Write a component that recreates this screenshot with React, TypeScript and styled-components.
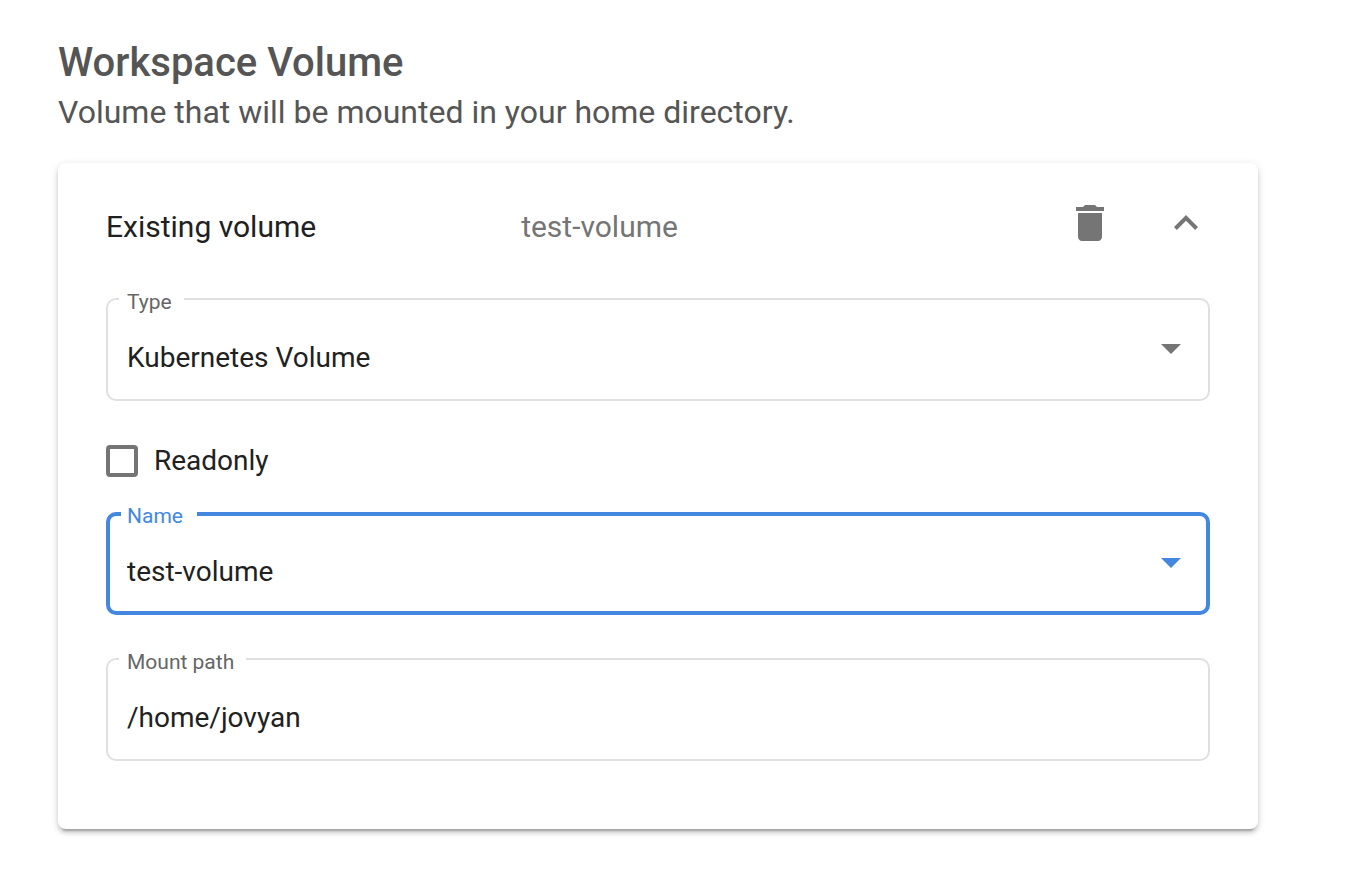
import React, { useState } from "react";
import styled, { createGlobalStyle } from "styled-components";

const colors = {
  heading: "#555555",
  text: "#212121",
  muted: "#757575",
  label: "#666666",
  outline: "#e0e0e0",
  primary: "#4387df",
};

const GlobalStyle = createGlobalStyle`
  *, *::before, *::after { box-sizing: border-box; }
  body {
    margin: 0;
    background: #ffffff;
    color: ${colors.text};
    font-family: Roboto, "Liberation Sans", sans-serif;
  }
  button, input, select { font-family: inherit; }
`;

const Section = styled.section`
  padding: 39px 92px 54px 58px;
`;

const Title = styled.h1`
  margin: 0;
  color: ${colors.heading};
  font-size: 40px;
  font-weight: 500;
  line-height: 48px;
`;

const Subtitle = styled.p`
  margin: 0 0 29px;
  padding-top: 3px;
  color: ${colors.heading};
  font-size: 32px;
  line-height: 44px;
`;

const Card = styled.article`
  padding: 36px 48px 68px;
  border-radius: 8px;
  background: #ffffff;
  box-shadow:
    0 6px 2px -4px rgba(0, 0, 0, 0.2),
    0 4px 4px 0 rgba(0, 0, 0, 0.14),
    0 2px 10px 0 rgba(0, 0, 0, 0.12);
`;

const CardHeader = styled.header`
  display: grid;
  grid-template-columns: 16fr 21fr auto;
  align-items: center;
  margin-bottom: 51px;
`;

const CardTitle = styled.h2`
  margin: 0;
  padding-top: 8px;
  font-size: 30px;
  font-weight: 400;
  line-height: 40px;
`;

const CardSummary = styled.span`
  padding-top: 8px;
  color: ${colors.muted};
  font-size: 30px;
  line-height: 40px;
`;

const Actions = styled.div`
  display: flex;
  gap: 48px;
`;

const IconButton = styled.button`
  display: flex;
  align-items: center;
  justify-content: center;
  width: 48px;
  height: 48px;
  padding: 0;
  border: 0;
  background: transparent;
  color: ${colors.muted};
  cursor: pointer;
`;

const Form = styled.form`
  display: flex;
  flex-direction: column;
`;

const Field = styled.div<{ $active?: boolean }>`
  position: relative;
  color: ${(p) => (p.$active ? colors.primary : colors.muted)};
`;

const FieldLabel = styled.label<{ $active?: boolean }>`
  position: absolute;
  top: -8px;
  left: ${(p) => (p.$active ? 15 : 13)}px;
  padding: 0 ${(p) => (p.$active ? 14 : 12)}px 0 ${(p) => (p.$active ? 6 : 8)}px;
  background: #ffffff;
  color: ${(p) => (p.$active ? colors.primary : colors.label)};
  font-size: 21px;
  line-height: 24px;
`;

const control = `
  display: block;
  width: 100%;
  height: 103px;
  margin: 0;
  border-radius: 10px;
  outline: none;
  background: transparent;
  color: ${colors.text};
  font-size: 28px;
  line-height: 36px;
  appearance: none;
`;

const Select = styled.select<{ $active?: boolean }>`
  ${control}
  border: ${(p) => (p.$active ? `4px solid ${colors.primary}` : `2px solid ${colors.outline}`)};
  padding: 16px 60px 0 ${(p) => (p.$active ? 17 : 19)}px;
`;

const TextInput = styled.input`
  ${control}
  border: 2px solid ${colors.outline};
  padding: 16px 19px 0;
`;

const SelectArrow = styled.svg`
  position: absolute;
  top: 46px;
  right: 29px;
  pointer-events: none;
`;

const CheckRow = styled.label`
  display: flex;
  align-items: center;
  align-self: flex-start;
  gap: 16px;
  margin: 44px 0 35px;
  font-size: 28px;
  line-height: 32px;
`;

const Checkbox = styled.input`
  width: 32px;
  height: 32px;
  margin: 0;
  border: 4px solid ${colors.muted};
  border-radius: 4px;
  background: #ffffff;
  appearance: none;

  &:checked {
    border-color: ${colors.primary};
    background: ${colors.primary};
  }
`;

const LastField = styled(Field)`
  margin-top: 43px;
`;

const Arrow = () => (
  <SelectArrow width="20" height="10" viewBox="0 0 20 10" aria-hidden="true">
    <path d="M0 0h20L10 10z" fill="currentColor" />
  </SelectArrow>
);

export default function App() {
  const [readonly, setReadonly] = useState(false);
  const [path, setPath] = useState("/home/jovyan");

  return (
    <>
      <GlobalStyle />
      <Section>
        <Title>Workspace Volume</Title>
        <Subtitle>Volume that will be mounted in your home directory.</Subtitle>
        <Card>
          <CardHeader>
            <CardTitle>Existing volume</CardTitle>
            <CardSummary>test-volume</CardSummary>
            <Actions>
              <IconButton type="button" aria-label="Delete volume">
                <svg width="48" height="48" viewBox="0 0 24 24" fill="currentColor">
                  <path d="M6 19c0 1.1.9 2 2 2h8c1.1 0 2-.9 2-2V7H6v12zM19 4h-3.5l-1-1h-5l-1 1H5v2h14V4z" />
                </svg>
              </IconButton>
              <IconButton type="button" aria-label="Collapse panel">
                <svg width="24" height="16" viewBox="0 0 24 16" fill="currentColor">
                  <path d="M12 0L24 12L21.2 14.9L12 5.7L2.8 14.9L0 12z" />
                </svg>
              </IconButton>
            </Actions>
          </CardHeader>
          <Form>
            <Field>
              <Select id="type" defaultValue="kubernetes">
                <option value="kubernetes">Kubernetes Volume</option>
              </Select>
              <FieldLabel htmlFor="type">Type</FieldLabel>
              <Arrow />
            </Field>
            <CheckRow>
              <Checkbox
                type="checkbox"
                checked={readonly}
                onChange={(e) => setReadonly(e.target.checked)}
              />
              Readonly
            </CheckRow>
            <Field $active>
              <Select id="name" $active defaultValue="test-volume">
                <option value="test-volume">test-volume</option>
              </Select>
              <FieldLabel htmlFor="name" $active>Name</FieldLabel>
              <Arrow />
            </Field>
            <LastField>
              <TextInput
                id="path"
                type="text"
                value={path}
                onChange={(e) => setPath(e.target.value)}
              />
              <FieldLabel htmlFor="path">Mount path</FieldLabel>
            </LastField>
          </Form>
        </Card>
      </Section>
    </>
  );
}
